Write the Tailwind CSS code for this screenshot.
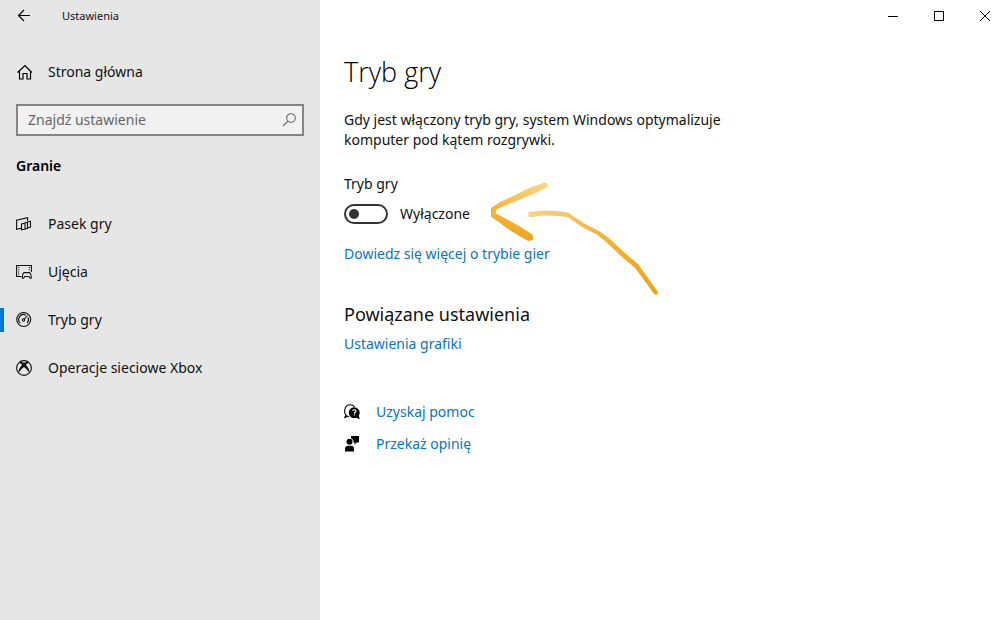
<!DOCTYPE html>
<html lang="pl">
<head>
<meta charset="utf-8">
<meta name="viewport" content="width=device-width, initial-scale=1">
<title>Ustawienia</title>
<script src="https://cdn.jsdelivr.net/npm/@tailwindcss/browser@4"></script>
</head>
<body class="flex min-h-screen overflow-x-hidden bg-white font-['Noto_Sans','Open_Sans',sans-serif] text-sm leading-5 text-[#111]">
<aside class="w-80 shrink-0 bg-[#e6e6e6]">
  <header class="flex h-8 items-center">
    <button type="button" aria-label="Wstecz" class="flex h-8 w-12 items-center justify-center">
      <svg class="size-4" viewBox="0 0 16 16" fill="none" stroke="#000" stroke-width="1.2"><path d="M14 7.5H2.500M8 2L2.500 7.500L8 13"/></svg>
    </button>
    <span class="pl-3.5 text-[11px]">Ustawienia</span>
  </header>
  <a href="#" class="mt-4 flex h-12 items-center gap-4 px-4">
    <svg class="size-4" viewBox="0 0 16 16" fill="none" stroke="#000" stroke-width="1.2"><path d="M1.500 8.500L9 1.500L16 8.500M3.500 7V15H7V9.500H11V15H14.500V7"/></svg>
    <span>Strona główna</span>
  </a>
  <form class="relative mx-4 mt-2">
    <input type="text" aria-label="Znajdź ustawienie" placeholder="Znajdź ustawienie" class="block h-8 w-full border-2 border-[#858585] bg-[#f1f1f1] pr-8 pb-0.5 pl-2.5 placeholder:text-[#666] outline-none">
    <svg class="absolute top-2 right-1.5 size-4" viewBox="0 0 16 16" fill="none" stroke="#666" stroke-width="1.1"><circle cx="9" cy="6" r="4.300"/><path d="M6 9.200L1 14"/></svg>
  </form>
  <h2 class="mx-4 mt-5 font-semibold text-black">Granie</h2>
  <nav class="mt-6">
    <a href="#" class="flex h-12 items-center gap-4 px-4">
      <svg class="size-4" viewBox="0 0 16 16" fill="none" stroke="#111" stroke-width="1.100"><path d="M5 12.300L.6 13.300V4.300L11.600 1.700V5M5.500 8L9 7V13L5.500 13.800ZM9 7L11.500 6V12.600L9 13M11.500 6L14.500 5.300V11L11.500 11.800"/></svg>
      <span>Pasek gry</span>
    </a>
    <a href="#" class="flex h-12 items-center gap-4 px-4">
      <svg class="size-4" viewBox="0 0 16 16" fill="none" stroke="#111" stroke-width="1.100"><path d="M5.500 12.500H.6V1.500H15.400V8"/><path d="M2.700 3V12M13.300 3V7.500" stroke-dasharray="1 1.200"/><path d="M8 8.600H13.500L14.500 9.500L15.400 13.500C15 15 13.800 14.200 12.800 12.500H8.800C7.700 14.200 6.600 15 6.200 13.500L7 9.500Z"/></svg>
      <span>Ujęcia</span>
    </a>
    <a href="#" aria-current="page" class="relative flex h-12 items-center gap-4 px-4 before:absolute before:top-3 before:left-0 before:h-6 before:w-1 before:bg-[#0078d7]">
      <svg class="size-4" viewBox="0 0 16 16" fill="none" stroke="#111" stroke-width="1.100"><circle cx="7.700" cy="7.500" r="7"/><path d="M4.200 11A4.900 4.900 0 0 1 9.800 3.100M12 5.500A4.900 4.900 0 0 1 11.200 11M8 7.500L11.500 3.500"/><circle cx="7.500" cy="8" r="1.200"/></svg>
      <span>Tryb gry</span>
    </a>
    <a href="#" class="flex h-12 items-center gap-4 px-4">
      <svg class="size-4" viewBox="0 0 16 16"><circle cx="8" cy="8" r="7.400" fill="none" stroke="#111" stroke-width="1.100"/><path fill="#111" d="M3.300 1.800C5 1.500 6.700 2.200 8 3.100C9.300 2.200 11 1.500 12.700 1.800L13 3C12 2.800 10.700 3.900 10 4.900C12.300 7.300 14 10.500 13.400 13.100C12 10.800 10.300 8.600 8 6.900C5.700 8.600 4 10.800 2.600 13.100C2 10.500 3.700 7.300 6 4.900C5.300 3.900 4 2.800 3 3Z"/></svg>
      <span>Operacje sieciowe Xbox</span>
    </a>
  </nav>
</aside>
<main class="relative min-w-0 flex-1 overflow-hidden">
  <div class="-mr-2 flex h-8 justify-end">
    <button type="button" aria-label="Minimalizuj" class="flex w-[46px] items-center justify-center"><svg class="size-3" viewBox="0 0 12 12" stroke="#000"><path d="M1 6.500H11"/></svg></button>
    <button type="button" aria-label="Maksymalizuj" class="flex w-[46px] items-center justify-center"><svg class="size-3" viewBox="0 0 12 12" fill="none" stroke="#000"><path d="M1.500 1.500H10.500V10.500H1.500Z"/></svg></button>
    <button type="button" aria-label="Zamknij" class="flex w-[46px] items-center justify-center"><svg class="size-3" viewBox="0 0 12 12" stroke="#000"><path d="M1 1L11 11M11 1L1 11"/></svg></button>
  </div>
  <div class="px-6">
    <h1 class="mt-5 font-['Open_Sans'] text-[27px] leading-10 font-light text-black">Tryb gry</h1>
    <p class="mt-[18px] max-w-[400px]">Gdy jest włączony tryb gry, system Windows optymalizuje komputer pod kątem rozgrywki.</p>
    <div class="mt-6" id="mode-label">Tryb gry</div>
    <label class="mt-2 flex h-6 w-fit items-center gap-3">
      <input type="checkbox" role="switch" aria-labelledby="mode-label" class="h-5 w-11 appearance-none rounded-full border-2 border-[#333] p-[3px] before:block before:size-2.5 before:rounded-full before:bg-[#333] checked:before:ml-auto">
      <span>Wyłączone</span>
    </label>
    <a href="#" class="mt-[18px] block w-fit text-[#0a73bd]">Dowiedz się więcej o trybie gier</a>
    <h2 class="mt-[38px] text-lg leading-6">Powiązane ustawienia</h2>
    <a href="#" class="mt-2 block w-fit text-[#0a73bd]">Ustawienia grafiki</a>
    <div class="mt-12">
      <a href="#" class="flex h-5 w-fit items-center gap-4 text-[#0a73bd]">
        <svg class="size-4" viewBox="0 0 16 16"><path d="M2 11.500L.7 13.500L4 12.500C1.500 11.500.3 9 .7 6C1.200 2.800 3.500.8 6.200.8C8.300.8 9.700 1.700 10.600 3" fill="none" stroke="#000" stroke-width="1.100"/><path d="M10.300 3.300A5.400 5.400 0 0 1 14.800 11.600L15.800 15.200L12.200 13.700A5.400 5.400 0 1 1 10.300 3.300Z"/><path d="M8.700 7C8.900 5.300 12 5.400 11.900 7.100C11.800 8.300 10.300 8.300 10.300 9.700M10.300 10.500V11.600" fill="none" stroke="#fff" stroke-width="1.200"/></svg>
        <span>Uzyskaj pomoc</span>
      </a>
      <a href="#" class="mt-3 flex h-5 w-fit items-center gap-4 text-[#0a73bd]">
        <svg class="size-4" viewBox="0 0 16 16"><circle cx="5.500" cy="5.800" r="3"/><path d="M1 15.500V13C1 10.800 2.500 9.700 4.200 9.700H7C8.700 9.700 10 10.800 10 13V15.500ZM7 0H15V6.500H12.500L10.500 8.700V6.500H9.500C9.700 4.500 8.800 2.900 7 2.300Z"/></svg>
        <span>Przekaż opinię</span>
      </a>
    </div>
  </div>
  <svg class="pointer-events-none absolute top-[170px] left-40 h-[135px] w-[190px]" viewBox="0 0 190 135" fill="none" aria-hidden="true">
    <defs>
      <linearGradient id="head" gradientUnits="userSpaceOnUse" x1="55" y1="14" x2="45" y2="70"><stop stop-color="#fad487"/><stop offset=".5" stop-color="#f4b842"/><stop offset="1" stop-color="#eda41c"/></linearGradient>
      <linearGradient id="tail" gradientUnits="userSpaceOnUse" x1="48" y1="44" x2="177" y2="124"><stop stop-color="#fad48a"/><stop offset=".4" stop-color="#f4b842"/><stop offset="1" stop-color="#eda41c"/></linearGradient>
    </defs>
    <path fill="url(#head)" d="M64 12.500L67 13L68 16L65 18.500L53 24L36 31L17 39L15.500 43L32 52L44 59L53 65V70L48 71L31 61L11 46.500L11 38L20 32L33 26L47 19Z"/>
    <path fill="url(#tail)" d="M48 42L64 40.500L78 41L89 43L93 46L105 54L119 61L130 69L145 83L158 94L168 108L178 122L177 125L174 124L164 110L155 98L142 87L125 71L116 64L102 57L88 47L77 46L62 45.500L49 47.500Z"/>
  </svg>
</main>
</body>
</html>
